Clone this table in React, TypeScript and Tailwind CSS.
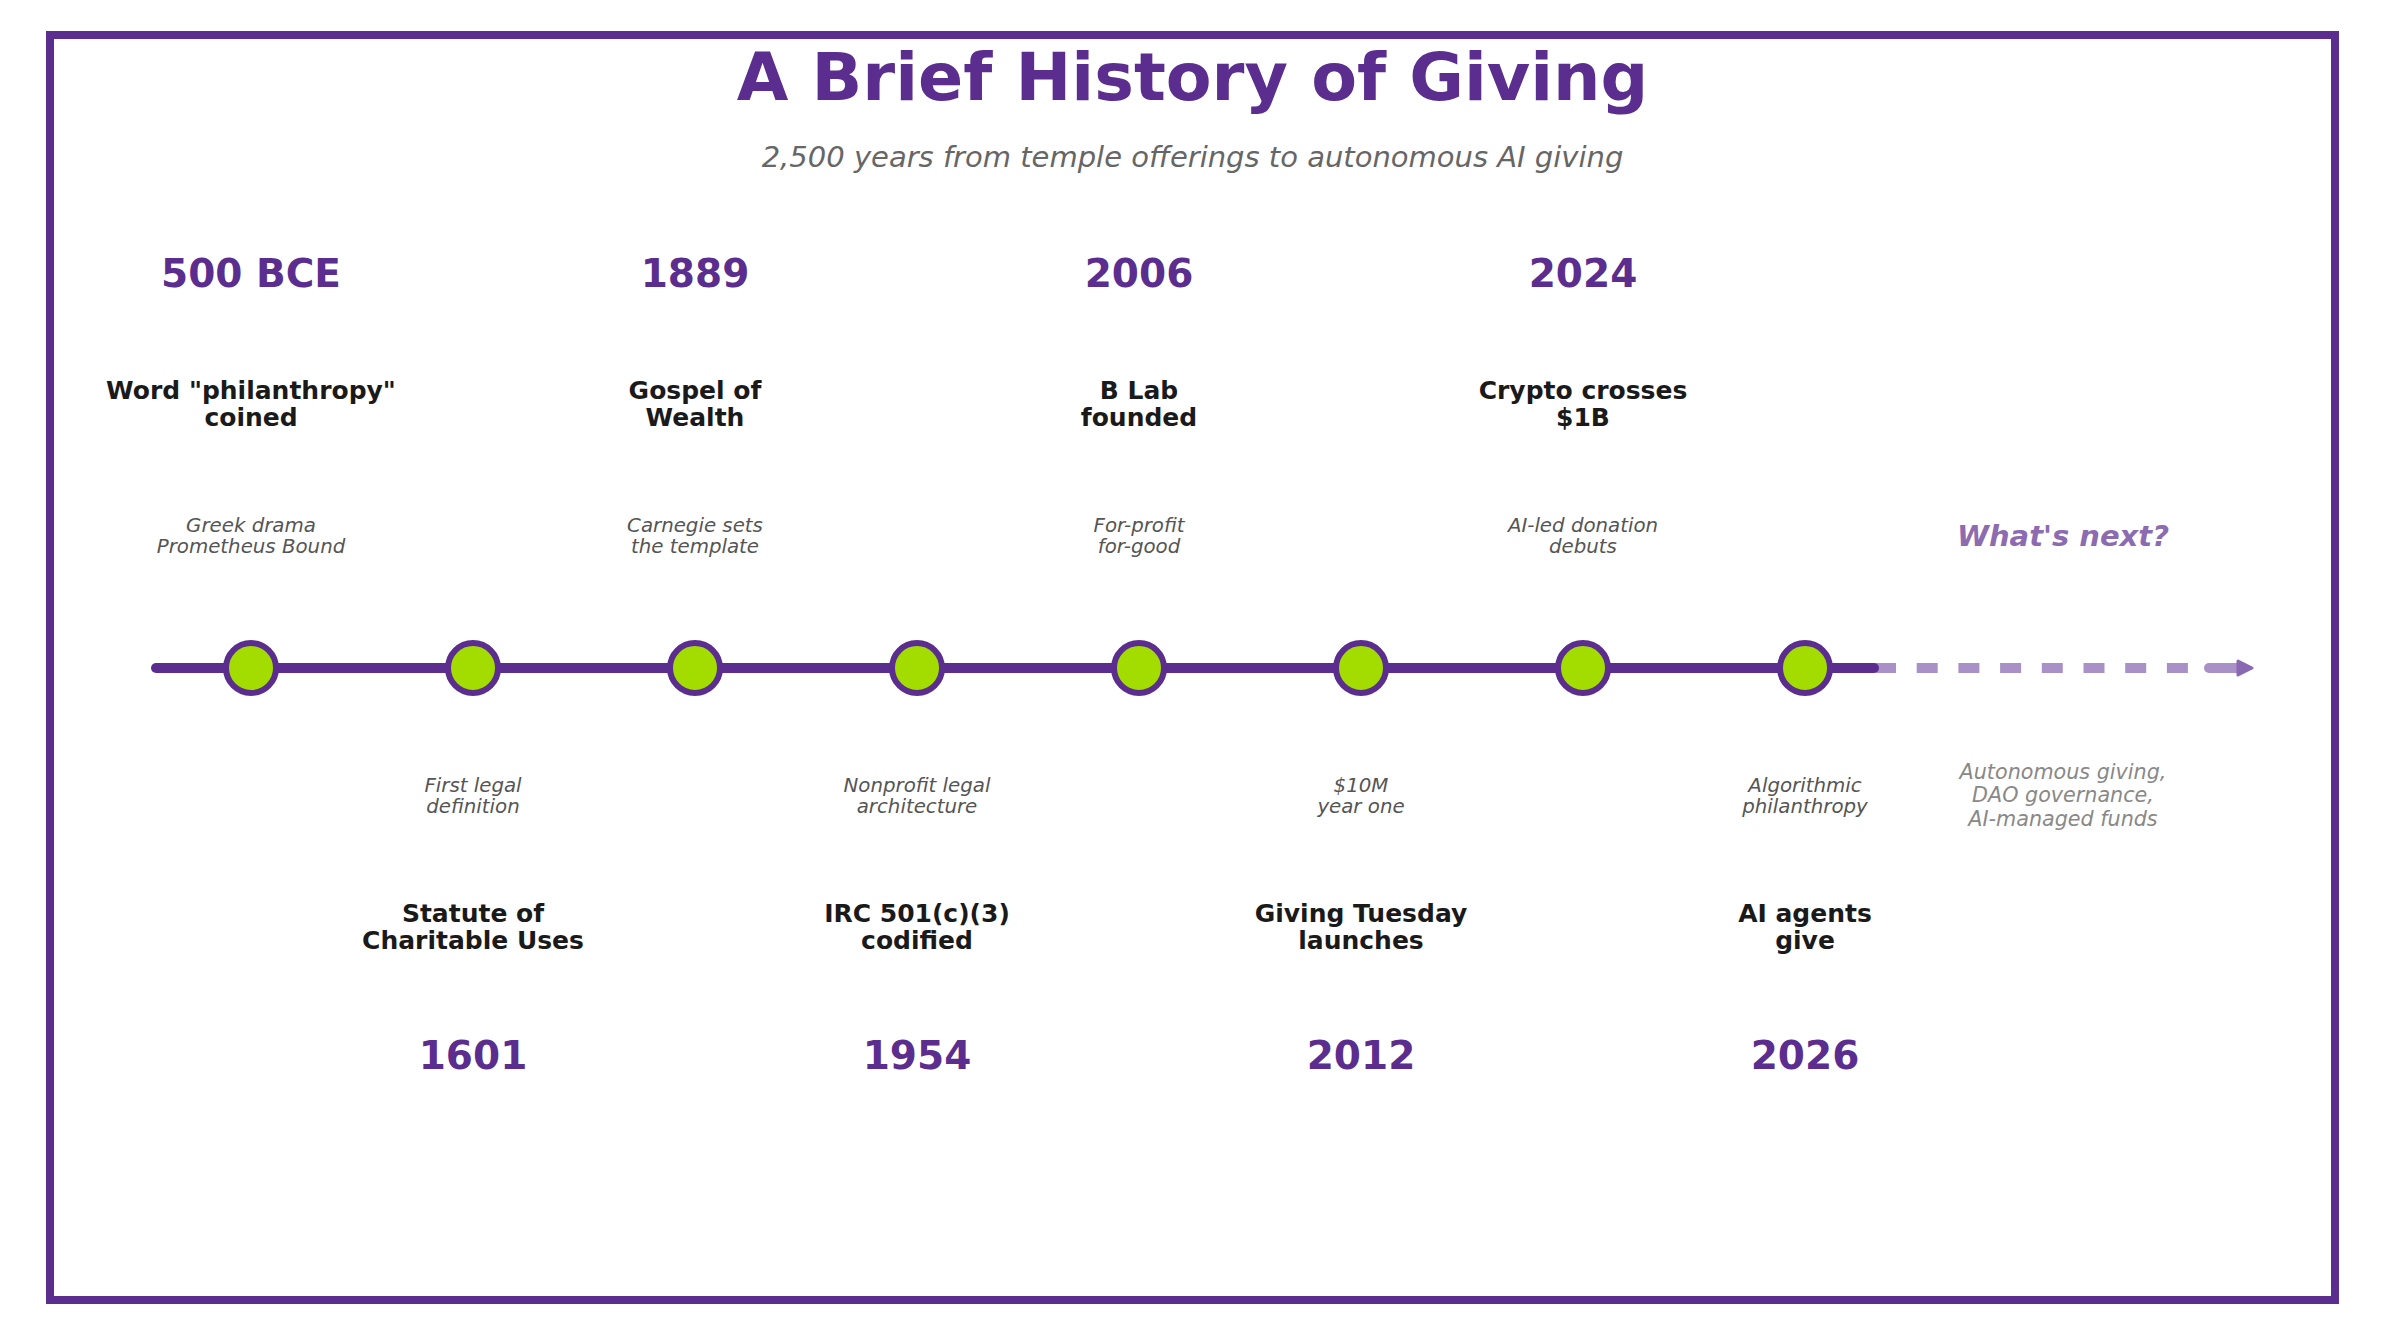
const PURPLE = "#5b2d8e";

interface Milestone {
  col: number;
  year: string;
  title: string;
  desc: string;
}

const above: Milestone[] = [
  { col: 0, year: "500 BCE", title: 'Word "philanthropy"\ncoined', desc: "Greek drama\nPrometheus Bound" },
  { col: 2, year: "1889", title: "Gospel of\nWealth", desc: "Carnegie sets\nthe template" },
  { col: 4, year: "2006", title: "B Lab\nfounded", desc: "For-profit\nfor-good" },
  { col: 6, year: "2024", title: "Crypto crosses\n$1B", desc: "AI-led donation\ndebuts" },
];

const below: Milestone[] = [
  { col: 1, year: "1601", title: "Statute of\nCharitable Uses", desc: "First legal\ndefinition" },
  { col: 3, year: "1954", title: "IRC 501(c)(3)\ncodified", desc: "Nonprofit legal\narchitecture" },
  { col: 5, year: "2012", title: "Giving Tuesday\nlaunches", desc: "$10M\nyear one" },
  { col: 7, year: "2026", title: "AI agents\ngive", desc: "Algorithmic\nphilanthropy" },
];

// one row of the 9-column grid; cells are fixed height and text may overflow both ways
function Row({
  items,
  pick,
  height,
  className,
  extra,
}: {
  items: Milestone[];
  pick: (m: Milestone) => string;
  height: string;
  className: string;
  extra?: React.ReactNode;
}) {
  const cells = Array.from({ length: 8 }, (_, i) => items.find(m => m.col === i));
  return (
    <div className="grid grid-cols-[repeat(8,222px)_294px] ml-[86px]">
      {cells.map((m, i) => (
        <div key={i} className={`flex items-center justify-center ${height}`}>
          {m && <div className={`whitespace-pre text-center shrink-0 ${className}`}>{pick(m)}</div>}
        </div>
      ))}
      <div className={`flex items-center justify-center ${height}`}>{extra}</div>
    </div>
  );
}

function Timeline() {
  const dots = Array.from({ length: 8 }, (_, i) => 111 + i * 222);
  return (
    <svg width="2140" height="60" viewBox="0 0 2140 60" className="ml-[86px] block">
      <line x1="1735" y1="30" x2="2050" y2="30" stroke="#a991c8" strokeWidth="10" strokeDasharray="21 20.7" />
      <line x1="16" y1="30" x2="1734" y2="30" stroke={PURPLE} strokeWidth="10" strokeLinecap="round" />
      <line x1="2069" y1="30" x2="2102" y2="30" stroke="#a991c8" strokeWidth="10" strokeLinecap="round" />
      <polygon points="2098,23 2112,30 2098,37" fill="#8a69b2" stroke="#8a69b2" strokeWidth="3" strokeLinejoin="round" />
      {dots.map(x => (
        <circle key={x} cx={x} cy="30" r="25" fill="#a3dd00" stroke={PURPLE} strokeWidth="6" />
      ))}
    </svg>
  );
}

export default function App() {
  return (
    <div className="w-[2385px] h-[1335px] bg-white pt-[31px] pl-[46px] font-['DejaVu_Sans',sans-serif]">
      <div className="w-[2293px] h-[1273px] border-8 border-[#5b2d8e] flex flex-col">
        <h1 className="mt-[5px] text-center text-[66.7px] leading-[66.7px] font-bold text-[#5b2d8e]">
          A Brief History of Giving
        </h1>
        <p className="mt-[32px] text-center text-[29px] leading-[29px] italic text-[#666666]">
          2,500 years from temple offerings to autonomous AI giving
        </p>

        <div className="mt-[82px]">
          <Row items={above} pick={m => m.year} height="h-[39px]"
            className="text-[39px] leading-[39px] font-bold text-[#5b2d8e]" />
        </div>
        <div className="mt-[84px]">
          <Row items={above} pick={m => m.title} height="h-[55px]"
            className="text-[25px] leading-[27.5px] font-bold text-[#1a1a1a]" />
        </div>
        <div className="mt-[83px]">
          <Row items={above} pick={m => m.desc} height="h-[43px]"
            className="text-[19.8px] leading-[21.5px] italic text-[#555555]"
            extra={
              <div className="whitespace-nowrap text-[29px] leading-[29px] font-bold italic text-[#8c6bb1]">
                What's next?
              </div>
            } />
        </div>

        <div className="mt-[80px]">
          <Timeline />
        </div>

        <div className="mt-[77px]">
          <Row items={below} pick={m => m.desc} height="h-[43px]"
            className="text-[19.8px] leading-[21.5px] italic text-[#555555]"
            extra={
              <div className="whitespace-pre text-center shrink-0 text-[20.7px] leading-[23.5px] italic text-[#888888]">
                {"Autonomous giving,\nDAO governance,\nAI-managed funds"}
              </div>
            } />
        </div>
        <div className="mt-[82px]">
          <Row items={below} pick={m => m.title} height="h-[55px]"
            className="text-[25px] leading-[27.5px] font-bold text-[#1a1a1a]" />
        </div>
        <div className="mt-[81px]">
          <Row items={below} pick={m => m.year} height="h-[39px]"
            className="text-[39px] leading-[39px] font-bold text-[#5b2d8e]" />
        </div>
      </div>
    </div>
  );
}
